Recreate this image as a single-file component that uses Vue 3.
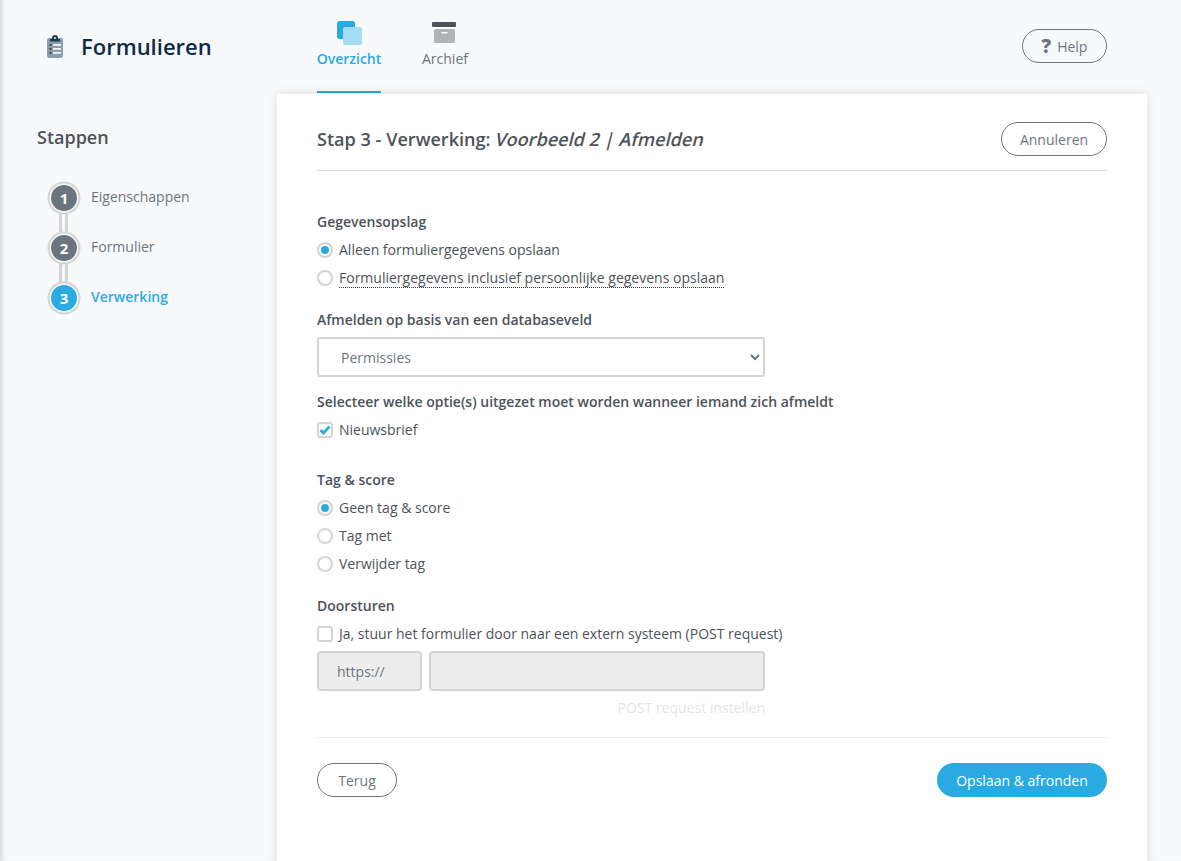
<script setup>
const steps = [
  { n: 1, label: 'Eigenschappen' },
  { n: 2, label: 'Formulier' },
  { n: 3, label: 'Verwerking', active: true },
]
const tagOptions = [
  { label: 'Geen tag & score', on: true },
  { label: 'Tag met' },
  { label: 'Verwijder tag' },
]
</script>

<template>
  <div class="page">
    <header class="top">
      <div class="brand">
        <svg class="brand-icon" width="16" height="23" viewBox="0 0 16 23">
          <rect x="0" y="3" width="16" height="20" rx="2" fill="#8b9cab" />
          <path d="M5 4V3a3 3 0 0 1 6 0v1h2v2.500H3V4z" fill="#1f3a55" />
          <circle cx="8" cy="3" r="1" fill="#f0f2f5" />
          <rect x="6" y="9" width="8" height="1.800" fill="#eef1f4" />
          <rect x="6" y="13" width="8" height="1.800" fill="#eef1f4" />
          <rect x="6" y="17" width="8" height="1.800" fill="#eef1f4" />
          <rect x="2.500" y="9" width="2" height="1.800" fill="#4a3a30" />
          <rect x="2.500" y="13" width="2" height="1.800" fill="#4a3a30" />
          <rect x="2.500" y="17" width="2" height="1.800" fill="#4a3a30" />
        </svg>
        <h1>Formulieren</h1>
      </div>
      <nav class="tabs">
        <a class="tab active">
          <svg width="25" height="24" viewBox="0 0 25 24">
            <rect x="0" y="0" width="18" height="18" rx="2.500" fill="#29abe2" />
            <rect x="6" y="6" width="19" height="18" rx="2.500" fill="#a5dcf5" />
          </svg>
          <span>Overzicht</span>
        </a>
        <a class="tab">
          <svg class="archive" width="24" height="24" viewBox="0 0 24 24">
            <rect x="0" y="1" width="24" height="5" rx="1" fill="#4d5359" />
            <rect x="2" y="8" width="21" height="14" rx="1.500" fill="#b1b3b7" />
            <rect x="9.500" y="11" width="6" height="1.500" fill="#f8f9fb" />
          </svg>
          <span>Archief</span>
        </a>
      </nav>
      <button class="pill help"><span class="q">?</span>Help</button>
    </header>

    <div class="body">
      <aside class="side">
        <h2>Stappen</h2>
        <ol class="steps">
          <li v-for="s in steps" :key="s.n" class="step" :class="{ active: s.active }">
            <span class="bullet">{{ s.n }}</span>
            <span class="step-label">{{ s.label }}</span>
          </li>
        </ol>
      </aside>

      <main class="card">
        <div class="card-head">
          <h3>Stap 3 - Verwerking: <em>Voorbeeld 2 | Afmelden</em></h3>
          <button class="pill cancel">Annuleren</button>
        </div>

        <section class="group first">
          <div class="label">Gegevensopslag</div>
          <div class="opt"><span class="radio on"></span>Alleen formuliergegevens opslaan</div>
          <div class="opt"><span class="radio"></span><span class="dotted">Formuliergegevens inclusief persoonlijke gegevens opslaan</span></div>
        </section>

        <section class="group db">
          <div class="label">Afmelden op basis van een databaseveld</div>
          <select class="select">
            <option>Permissies</option>
          </select>
          <div class="label sel-label">Selecteer welke optie(s) uitgezet moet worden wanneer iemand zich afmeldt</div>
          <div class="opt">
            <span class="check">
              <svg width="12" height="10" viewBox="0 0 12 10"><path d="M1.500 5l3 3 6-6.500" fill="none" stroke="#29abe2" stroke-width="2.800" /></svg>
            </span>Nieuwsbrief
          </div>
        </section>

        <section class="group tag">
          <div class="label">Tag &amp; score</div>
          <div v-for="o in tagOptions" :key="o.label" class="opt"><span class="radio" :class="{ on: o.on }"></span>{{ o.label }}</div>
        </section>

        <section class="group forward">
          <div class="label">Doorsturen</div>
          <div class="opt"><span class="check"></span>Ja, stuur het formulier door naar een extern systeem (POST request)</div>
          <div class="url">
            <div class="field proto">https://</div>
            <div class="field grow"></div>
          </div>
          <div class="post">POST request instellen</div>
        </section>

        <footer class="foot">
          <button class="pill back">Terug</button>
          <button class="primary">Opslaan &amp; afronden</button>
        </footer>
      </main>
    </div>
  </div>
</template>

<style>
html, body { margin: 0; background: #f8f9fb; overflow: hidden; }
</style>

<style scoped>
.page {
  position: relative;
  width: 1181px;
  height: 861px;
  overflow: hidden;
  background: #f8f9fb;
  font-family: "Open Sans", sans-serif;
  font-size: 14px;
  color: #4d5359;
  box-sizing: border-box;
  box-shadow: inset 5px 0 5px -3px rgba(0, 0, 0, 0.14);
}
.top {
  height: 94px;
  box-sizing: border-box;
  display: flex;
  align-items: stretch;
  padding: 0 74px 0 47px;
}
.brand {
  display: flex;
  align-items: center;
  width: 270px;
  height: 92px;
}
.brand-icon { margin-right: 18px; }
.brand h1 {
  margin: 0;
  font-size: 22px;
  font-weight: 600;
  color: #0d2b45;
}
.tabs { display: flex; gap: 40px; }
.tab {
  display: flex;
  flex-direction: column;
  align-items: center;
  height: 93px;
  box-sizing: border-box;
  padding-top: 21px;
  color: #6c757d;
  font-size: 14px;
}
.tab svg { margin-bottom: 4px; }
.tab svg.archive { margin-right: 1px; }
.tab span { line-height: 20px; }
.tab.active {
  color: #29abe2;
  font-weight: 600;
  width: 64px;
  margin-right: 1px;
  white-space: nowrap;
  border-bottom: 2px solid #29abe2;
}
.pill {
  background: transparent;
  border: 1px solid #6c757d;
  border-radius: 17px;
  height: 34px;
  box-sizing: border-box;
  color: #6c757d;
  font: 14px "Open Sans", sans-serif;
  padding: 0;
}
.help {
  width: 85px;
  margin: 29px 0 0 auto;
  display: flex;
  align-items: center;
  justify-content: center;
}
.q {
  font-weight: 800;
  font-size: 19px;
  line-height: 14px;
  margin-right: 6px;
}
.body { display: flex; align-items: flex-start; }
.side { width: 277px; padding: 31px 0 0 37px; box-sizing: border-box; }
.side h2 {
  margin: 0;
  font-size: 18px;
  font-weight: 600;
  line-height: 24px;
  color: #4d5359;
}
.steps {
  list-style: none;
  margin: 24px 0 0;
  padding: 0 0 0 14px;
  color: #6c757d;
}
.step {
  position: relative;
  display: flex;
  align-items: center;
  height: 50px;
  gap: 14px;
}
.step + .step::before {
  content: "";
  position: absolute;
  left: 8px;
  top: -10px;
  width: 9px;
  height: 20px;
  box-sizing: border-box;
  border: solid #d4d4d4;
  border-width: 0 3px;
}
.bullet {
  position: relative;
  z-index: 1;
  width: 26px;
  height: 26px;
  border-radius: 50%;
  background: #6c757d;
  box-shadow: 0 0 0 1.500px #f8f9fb, 0 0 0 3.500px #d4d4d4;
  color: #fff;
  font-weight: 700;
  font-size: 15px;
  display: flex;
  align-items: center;
  justify-content: center;
}
.step-label { padding-bottom: 4px; }
.step.active { color: #29abe2; font-weight: 600; }
.step.active .bullet { background: #29abe2; }
.card {
  width: 870px;
  height: 780px;
  background: #fff;
  box-sizing: border-box;
  padding: 28px 40px 0;
  box-shadow: 0 0 10px rgba(0, 0, 0, 0.12);
}
.card-head {
  display: flex;
  justify-content: space-between;
  align-items: center;
  padding-bottom: 14px;
  border-bottom: 1px solid #d8d8d8;
}
.card-head h3 {
  margin: 0;
  font-size: 18.100px;
  font-weight: 560;
  color: #4d5359;
}
.card-head em {
  display: inline-block;
  margin-left: 1px;
  font-style: normal;
  transform: skewX(-14deg);
}
.cancel { width: 106px; }
.label { font-weight: 600; line-height: 20px; color: #4d5359; }
.group.first { margin-top: 41px; }
.group.db { margin-top: 18px; }
.group.tag { margin-top: 26px; }
.group.forward { margin-top: 18px; }
.opt {
  display: flex;
  align-items: center;
  height: 28px;
  line-height: 20px;
}
.label + .opt { margin-top: 4px; }
.radio, .check {
  flex: none;
  box-sizing: border-box;
  width: 16px;
  height: 16px;
  margin-right: 6px;
  background: #fff;
  border: 2px solid #d4d4d4;
  display: flex;
  align-items: center;
  justify-content: center;
}
.radio { border-radius: 50%; }
.radio.on::after {
  content: "";
  width: 8px;
  height: 8px;
  border-radius: 50%;
  background: #29abe2;
}
.check { border-radius: 3px; }
.dotted { border-bottom: 1px dotted #333; line-height: 19px; }
.select {
  display: block;
  width: 448px;
  height: 40px;
  margin-top: 7px;
  padding: 0 0 0 18px;
  background: #fff;
  border: 2px solid #d4d4d4;
  border-radius: 3px;
  font: 14px "Open Sans", sans-serif;
  color: #6c757d;
  box-sizing: border-box;
}
.sel-label { margin-top: 15px; }
.url { display: flex; gap: 7px; width: 448px; margin-top: 3px; }
.field {
  height: 40px;
  box-sizing: border-box;
  background: #ededed;
  border: 2px solid #d4d4d4;
  border-radius: 4px;
  color: #6c757d;
  line-height: 38px;
}
.proto { width: 105px; padding-left: 18px; }
.grow { flex: 1; }
.post {
  width: 448px;
  text-align: right;
  margin-top: 7px;
  line-height: 20px;
  color: #e6e6e6;
}
.foot {
  display: flex;
  justify-content: space-between;
  margin-top: 19px;
  padding-top: 25px;
  border-top: 1px solid #ececec;
}
.back { width: 80px; }
.primary {
  width: 170px;
  height: 34px;
  border: 0;
  border-radius: 17px;
  background: #29abe2;
  color: #fff;
  font: 500 14px "Open Sans", sans-serif;
}
</style>
